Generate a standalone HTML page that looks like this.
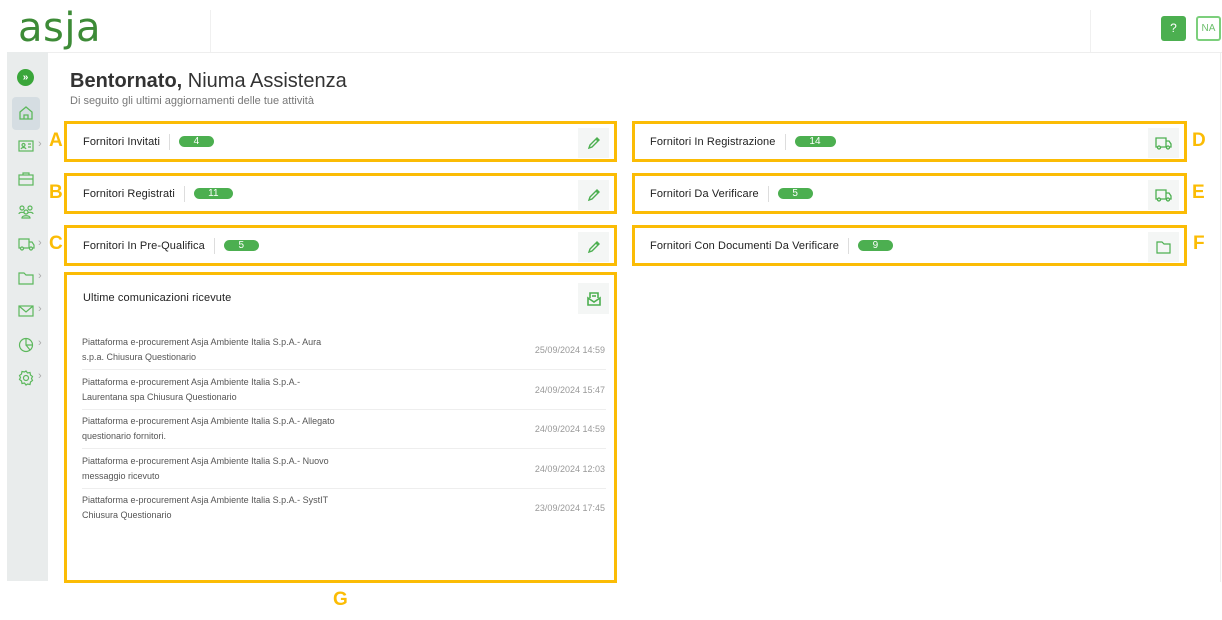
<!DOCTYPE html>
<html><head><meta charset="utf-8"><style>
*{margin:0;padding:0;box-sizing:border-box}
body{width:1222px;height:620px;background:#fff;position:relative;overflow:hidden;font-family:"Liberation Sans",sans-serif;color:#222}
.abs{position:absolute}
.box{position:absolute;border:3px solid #fbbc05;background:#fff}
.lbl{position:absolute;top:50%;transform:translateY(-50%);font-size:11px;color:#222;display:flex;align-items:center;white-space:nowrap;letter-spacing:0.1px}
.sep{display:inline-block;width:1px;height:16px;background:#ddd;margin:0 9px}
.pill{display:inline-block;background:#4caf50;color:#fff;border-radius:8px;height:11px;font-size:10px;line-height:12px;text-align:center;position:relative}
.ib{position:absolute;right:5px;top:4px;width:31px;height:30px;background:#f4f6f5;display:flex;align-items:center;justify-content:center}
.L{position:absolute;color:#fbbc05;font-weight:bold;font-size:19px}
.msg{position:absolute;left:15px;width:520px;font-size:9px;color:#555;line-height:15px}
.dt{position:absolute;right:9px;font-size:9px;color:#999}
.hr{position:absolute;left:15px;right:8px;height:1px;background:#eee}
.si{position:absolute;left:18px}
.ch{position:absolute;left:38px;color:#aaa;font-size:11px}
</style></head><body>
<div class="abs" style="left:18px;top:8px;font-size:40px;color:#3d8b37;letter-spacing:0.5px;font-family:'DejaVu Sans',sans-serif;line-height:40px;">asja</div>
<div class="abs" style="left:210px;top:10px;width:1px;height:42px;background:#f0f0f0"></div>
<div class="abs" style="left:1090px;top:10px;width:1px;height:42px;background:#f0f0f0"></div>
<div class="abs" style="left:1161px;top:16px;width:25px;height:25px;background:#4caf50;border-radius:3px;color:#fff;font-size:12px;text-align:center;line-height:25px">?</div>
<div class="abs" style="left:1196px;top:16px;width:25px;height:25px;border:2px solid #7ccf7c;border-radius:3px;color:#6cbf6c;font-size:10px;text-align:center;line-height:21px">NA</div>
<div class="abs" style="left:7px;top:52px;width:1215px;height:1px;background:#eee"></div>
<div class="abs" style="left:1220px;top:52px;width:1px;height:530px;background:#eee"></div>
<div class="abs" style="left:7px;top:52px;width:41px;height:529px;background:#e9ecec"></div>
<div class="abs" style="left:17px;top:69px;width:17px;height:17px;border-radius:50%;background:#3aa63a;color:#fff;font-size:10px;font-weight:bold;text-align:center;line-height:17px">»</div>
<div class="abs" style="left:12px;top:97px;width:28px;height:33px;background:#d5dde2;border-radius:4px"></div>
<svg class="si" style="top:105px" width="16" height="16" viewBox="0 0 16 16" fill="none" stroke="#5cb85c" stroke-width="1.3"><path d="M2 7L8 2l6 5v7H2z"/><path d="M6 14v-4h4v4"/></svg>
<svg class="si" style="top:139px" width="16" height="14" viewBox="0 0 16 14" fill="none" stroke="#5cb85c" stroke-width="1.2"><rect x="1" y="2" width="14" height="10"/><circle cx="5.5" cy="6" r="1.5"/><path d="M3 10c1-2 4-2 5 0M10 5h3M10 8h3"/></svg><span class="ch" style="top:138px">›</span>
<svg class="si" style="top:172px" width="16" height="14" viewBox="0 0 16 14" fill="none" stroke="#5cb85c" stroke-width="1.2"><rect x="1" y="3" width="14" height="10"/><path d="M5 3V1h6v2M1 7h14"/></svg>
<svg class="si" style="top:205px" width="16" height="14" viewBox="0 0 16 14" fill="none" stroke="#5cb85c" stroke-width="1.2"><circle cx="4" cy="3" r="2"/><circle cx="12" cy="3" r="2"/><circle cx="8" cy="7" r="2"/><path d="M1 9c0-2 4-2 5-1M15 9c0-2-4-2-5-1M4 13c0-3 8-3 8 0z"/></svg>
<svg class="si" style="top:237px" width="17" height="14" viewBox="0 0 17 14" fill="none" stroke="#5cb85c" stroke-width="1.2"><path d="M1 2h10v9H1zM11 5h3l2 3v3h-5"/><circle cx="4" cy="11.5" r="1.5" fill="#e9ecec"/><circle cx="13" cy="11.5" r="1.5" fill="#e9ecec"/></svg><span class="ch" style="top:237px">›</span>
<svg class="si" style="top:272px" width="16" height="13" viewBox="0 0 16 13" fill="none" stroke="#5cb85c" stroke-width="1.2"><path d="M1 1h5l2 2h7v9H1z"/></svg><span class="ch" style="top:270px">›</span>
<svg class="si" style="top:305px" width="16" height="12" viewBox="0 0 16 12" fill="none" stroke="#5cb85c" stroke-width="1.2"><rect x="1" y="1" width="14" height="10"/><path d="M1 1l7 6 7-6"/></svg><span class="ch" style="top:303px">›</span>
<svg class="si" style="top:337px" width="16" height="16" viewBox="0 0 16 16" fill="none" stroke="#5cb85c" stroke-width="1.2"><circle cx="8" cy="8" r="6.5"/><path d="M8 1.5V8h6.5M8 8l4 5"/></svg><span class="ch" style="top:337px">›</span>
<svg class="si" style="top:370px" width="16" height="16" viewBox="0 0 16 16" fill="none" stroke="#5cb85c" stroke-width="1.2"><circle cx="8" cy="8" r="2.5"/><path d="M8 1l1.5 2 2.5-.5.5 2.5 2 1.5-1 2 1 2-2 1.5-.5 2.5-2.5-.5L8 15l-1.5-2-2.5.5-.5-2.5-2-1.5 1-2-1-2 2-1.5.5-2.5 2.5.5z"/></svg><span class="ch" style="top:370px">›</span>
<div class="abs" style="left:70px;top:70px;font-size:20px;color:#333"><b>Bentornato,</b> Niuma Assistenza</div>
<div class="abs" style="left:70px;top:95px;font-size:11px;color:#777">Di seguito gli ultimi aggiornamenti delle tue attività</div>
<div class="box" style="left:64px;top:121px;width:553px;height:41px"><div class="lbl" style="left:16px">Fornitori Invitati<span class="sep"></span><span class="pill" style="width:35px">4</span></div><div class="ib"><svg width="14" height="14" viewBox="0 0 14 14" fill="none" stroke="#4caf50" stroke-width="1.4"><path d="M2 12l1-3 7-7 2 2-7 7zM9 3l2 2"/></svg></div></div>
<div class="box" style="left:64px;top:173px;width:553px;height:41px"><div class="lbl" style="left:16px">Fornitori Registrati<span class="sep"></span><span class="pill" style="width:39px">11</span></div><div class="ib"><svg width="14" height="14" viewBox="0 0 14 14" fill="none" stroke="#4caf50" stroke-width="1.4"><path d="M2 12l1-3 7-7 2 2-7 7zM9 3l2 2"/></svg></div></div>
<div class="box" style="left:64px;top:225px;width:553px;height:41px"><div class="lbl" style="left:16px">Fornitori In Pre-Qualifica<span class="sep"></span><span class="pill" style="width:35px">5</span></div><div class="ib"><svg width="14" height="14" viewBox="0 0 14 14" fill="none" stroke="#4caf50" stroke-width="1.4"><path d="M2 12l1-3 7-7 2 2-7 7zM9 3l2 2"/></svg></div></div>
<div class="box" style="left:632px;top:121px;width:555px;height:41px"><div class="lbl" style="left:15px">Fornitori In Registrazione<span class="sep"></span><span class="pill" style="width:41px">14</span></div><div class="ib"><svg width="17" height="14" viewBox="0 0 17 14" fill="none" stroke="#4caf50" stroke-width="1.3"><path d="M1 2h10v9H1zM11 5h3l2 3v3h-5"/><circle cx="4" cy="11.5" r="1.5" fill="#f4f6f5"/><circle cx="13" cy="11.5" r="1.5" fill="#f4f6f5"/></svg></div></div>
<div class="box" style="left:632px;top:173px;width:555px;height:41px"><div class="lbl" style="left:15px">Fornitori Da Verificare<span class="sep"></span><span class="pill" style="width:35px">5</span></div><div class="ib"><svg width="17" height="14" viewBox="0 0 17 14" fill="none" stroke="#4caf50" stroke-width="1.3"><path d="M1 2h10v9H1zM11 5h3l2 3v3h-5"/><circle cx="4" cy="11.5" r="1.5" fill="#f4f6f5"/><circle cx="13" cy="11.5" r="1.5" fill="#f4f6f5"/></svg></div></div>
<div class="box" style="left:632px;top:225px;width:555px;height:41px"><div class="lbl" style="left:15px">Fornitori Con Documenti Da Verificare<span class="sep"></span><span class="pill" style="width:35px">9</span></div><div class="ib"><svg width="15" height="13" viewBox="0 0 15 13" fill="none" stroke="#4caf50" stroke-width="1.2"><path d="M1 1h5l2 2h6v9H1z"/></svg></div></div>
<div class="box" style="left:64px;top:272px;width:553px;height:311px">
<div class="abs" style="left:16px;top:17px;font-size:11px;color:#222;letter-spacing:0.1px">Ultime comunicazioni ricevute</div>
<div class="ib" style="top:8px;right:5px;height:31px"><svg width="14" height="14" viewBox="0 0 14 14" fill="none" stroke="#4caf50" stroke-width="1.6"><path d="M3 6V1h8v5M1 6l6 4 6-4v7H1z"/><path d="M5 4h4"/></svg></div>
<div class="msg" style="top:60px">Piattaforma e-procurement Asja Ambiente Italia S.p.A.- Aura<br>s.p.a. Chiusura Questionario</div><div class="dt" style="top:70px">25/09/2024 14:59</div>
<div class="hr" style="top:94px"></div>
<div class="msg" style="top:100px">Piattaforma e-procurement Asja Ambiente Italia S.p.A.-<br>Laurentana spa Chiusura Questionario</div><div class="dt" style="top:110px">24/09/2024 15:47</div>
<div class="hr" style="top:134px"></div>
<div class="msg" style="top:139px">Piattaforma e-procurement Asja Ambiente Italia S.p.A.- Allegato<br>questionario fornitori.</div><div class="dt" style="top:149px">24/09/2024 14:59</div>
<div class="hr" style="top:173px"></div>
<div class="msg" style="top:179px">Piattaforma e-procurement Asja Ambiente Italia S.p.A.- Nuovo<br>messaggio ricevuto</div><div class="dt" style="top:189px">24/09/2024 12:03</div>
<div class="hr" style="top:213px"></div>
<div class="msg" style="top:218px">Piattaforma e-procurement Asja Ambiente Italia S.p.A.- SystIT<br>Chiusura Questionario</div><div class="dt" style="top:228px">23/09/2024 17:45</div>
</div>
<div class="L" style="left:49px;top:130px">A</div>
<div class="L" style="left:49px;top:182px">B</div>
<div class="L" style="left:49px;top:233px">C</div>
<div class="L" style="left:1192px;top:130px">D</div>
<div class="L" style="left:1192px;top:182px">E</div>
<div class="L" style="left:1193px;top:233px">F</div>
<div class="L" style="left:333px;top:589px">G</div>
</body></html>
